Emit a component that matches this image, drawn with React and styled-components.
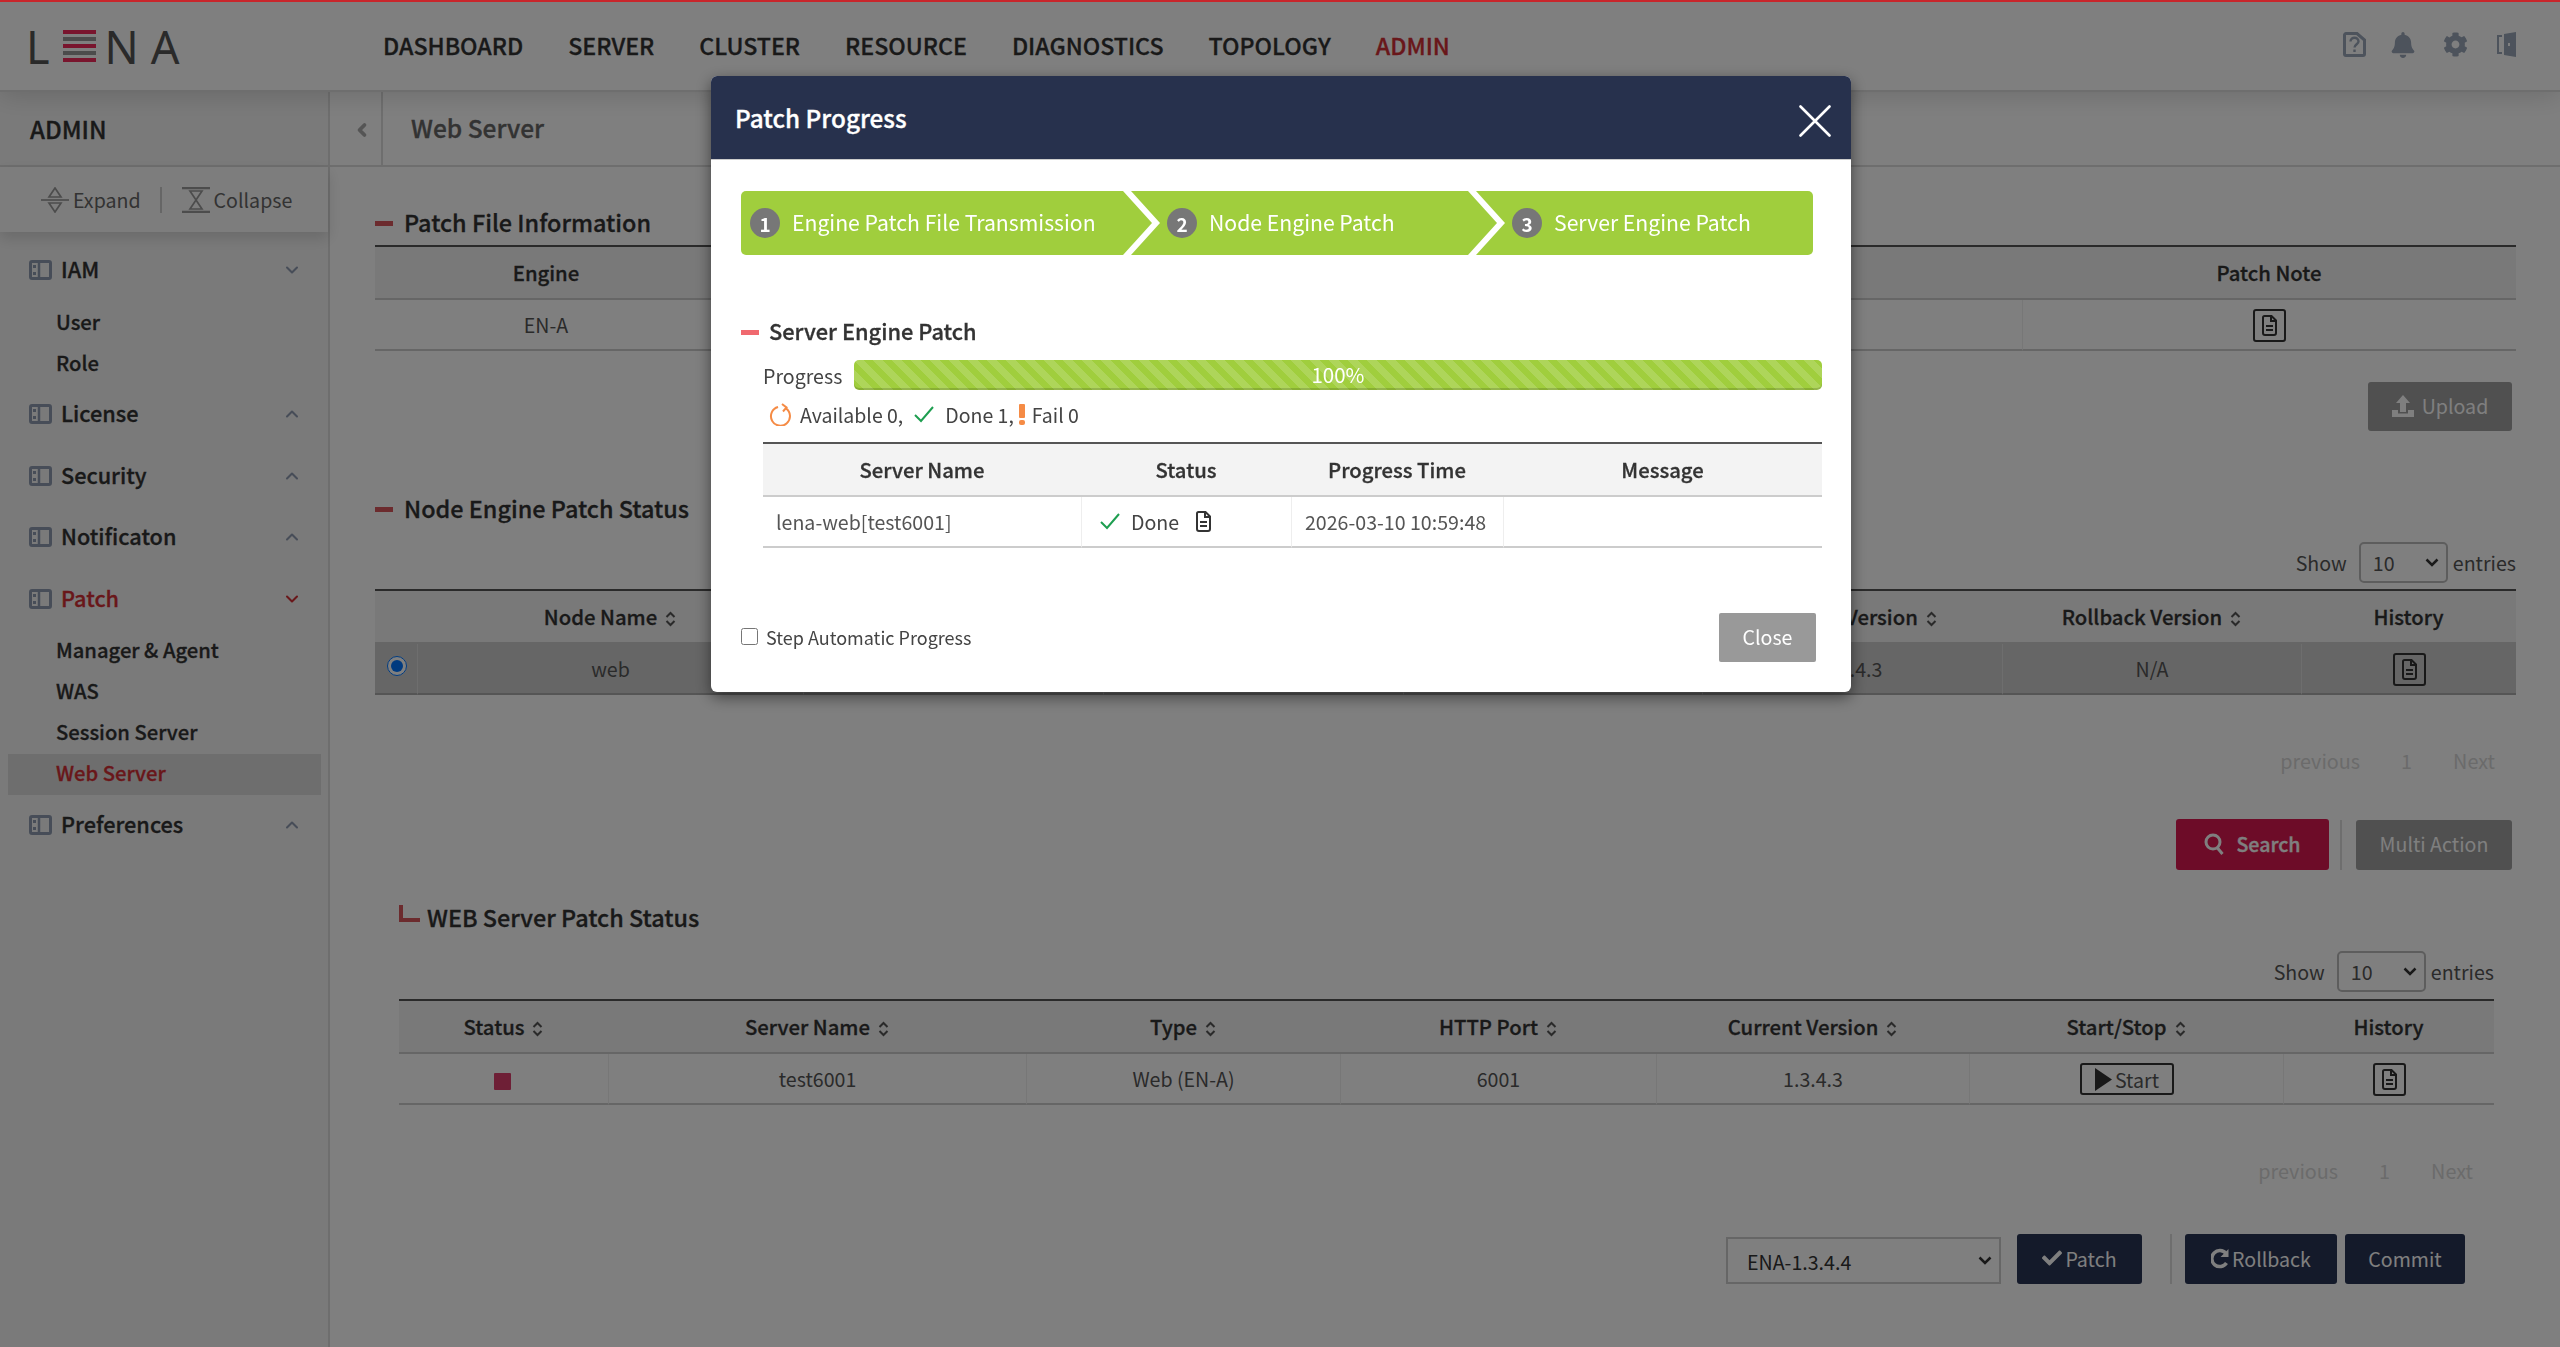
import React from 'react'
import styled, { createGlobalStyle, css } from 'styled-components'
import { FaBell, FaCog, FaCheck } from 'react-icons/fa'
import { ChevronDown, ChevronUp, ChevronLeft } from 'lucide-react'

const GlobalStyle = createGlobalStyle`
  html, body { margin: 0; padding: 0; height: 100%; background: #fff; overflow: hidden; }
  body { font-family: "Noto Sans CJK KR", "Noto Sans", sans-serif; color: #333; }
  * { box-sizing: border-box; }
`

// medium cut, thickened a touch for the soft look of the screen
const medium = css`
  font-weight: 500;
  -webkit-text-stroke: 0.3px currentColor;
`

const selectArrow = color =>
  `url("data:image/svg+xml,%3Csvg xmlns='http://www.w3.org/2000/svg' width='14' height='9'%3E%3Cpath d='M1.500 1.500 7 7l5.500-5.500' fill='none' stroke='${color}' stroke-width='2.500'/%3E%3C/svg%3E")`

const Page = styled.div`
  width: 2560px;
  height: 1347px;
  display: flex;
  flex-direction: column;
`

const TopBar = styled.header`
  height: 92px;
  flex: none;
  display: flex;
  align-items: center;
  border-top: 2px solid #c8262b;
  border-bottom: 2px solid #ddd;
  box-shadow: 0 4px 24px rgba(0, 0, 0, 0.14);
  position: relative;
  z-index: 2;
  background: #fff;
  padding-right: 44px;
`

const Logo = styled.div`
  width: 383px;
  padding-left: 26px;
  display: flex;
  align-items: center;
  font-family: "Noto Sans", sans-serif;
  font-weight: 400;
  font-size: 45px;
  color: #555;
  svg { margin: 0 9px 0 13px; }
`

const LogoTail = styled.span`
  letter-spacing: 12px;
`

const Nav = styled.nav`
  display: flex;
  gap: 45px;
  flex: 1;
`

const NavLink = styled.a`
  font-size: 23.2px;
  ${medium}
  margin-top: -3px;
  color: ${p => (p.$active ? '#d32f35' : '#333')};
`

const TopIcons = styled.div`
  display: flex;
  align-items: center;
  gap: 27px;
  margin-top: -3px;
  color: #9aa6b8;
  svg:nth-child(2) { margin-left: -3px; }
  svg:nth-child(3) { margin-right: 2px; }
`

const Body = styled.div`
  flex: 1;
  display: flex;
  min-height: 0;
`

const Sidebar = styled.aside`
  width: 330px;
  flex: none;
  background: #f5f5f5;
  border-right: 2px solid #ddd;
`

const SideTitle = styled.div`
  height: 75px;
  padding-left: 30px;
  display: flex;
  align-items: center;
  font-size: 24px;
  ${medium}
  border-bottom: 2px solid #ddd;
`

const ToolRow = styled.div`
  height: 65px;
  padding-left: 41px;
  display: flex;
  align-items: center;
  font-size: 19.6px;
  color: #666;
  background: #fafafa;
  box-shadow: 0 6px 14px rgba(0, 0, 0, 0.14);
  position: relative;
`

const ToolDivider = styled.span`
  width: 2px;
  height: 26px;
  background: #ccc;
  margin: 0 20px 0 19px;
`

const ToolIcon = styled.svg`
  margin-right: 4px;
  flex: none;
`

const Menu = styled.div`
  padding-top: 18px;
`

const Group = styled.div`
  padding-bottom: ${p => (p.$open ? '10px' : '21.5px')};
`

const GroupRow = styled.div`
  height: 40px;
  display: flex;
  align-items: center;
  padding: 0 26px 0 29px;
  font-size: 21.700px;
  ${medium}
  color: ${p => (p.$active ? '#d32f35' : '#333')};
  svg:first-child { margin-right: 9px; }
`

const GroupName = styled.span`
  flex: 1;
  padding-bottom: 3px;
`

const SubList = styled.div`
  margin-top: 12px;
`

const SubItem = styled.div`
  height: 41px;
  margin: 0 7px 0 8px;
  padding: 0 0 3px 48px;
  display: flex;
  align-items: center;
  font-size: 20.200px;
  ${medium}
  color: ${p => (p.$active ? '#d32f35' : '#333')};
  background: ${p => (p.$active ? '#dcdcdc' : 'transparent')};
`

const Main = styled.main`
  flex: 1;
  min-width: 0;
`

const TitleBar = styled.div`
  height: 75px;
  display: flex;
  align-items: center;
  border-bottom: 2px solid #ddd;
`

const CollapseCell = styled.div`
  width: 53px;
  height: 100%;
  padding: 3px 0 0 12px;
  display: flex;
  align-items: center;
  justify-content: center;
  border-right: 2px solid #ddd;
  color: #aaa;
`

const PageTitle = styled.h1`
  margin: 0 0 0 28px;
  padding-bottom: 2px;
  font-size: 24.500px;
  ${medium}
  color: #666;
`

const Content = styled.div`
  padding: 39px 44px 0 45px;
`

const Heading = styled.h2`
  margin: ${p => p.$top || 0}px 0 0;
  height: 34px;
  display: flex;
  align-items: center;
  gap: 11px;
  font-size: 23.400px;
  ${medium}
  color: #333;
  &::before {
    content: "";
    width: 18px;
    height: 5px;
    margin-top: 3px;
    background: #d9565c;
  }
  padding-bottom: 3px;
`

const SubHeading = styled.h2`
  margin: 31px 0 0;
  height: 34px;
  padding-bottom: 3px;
  display: flex;
  align-items: center;
  gap: 7px;
  font-size: 23.400px;
  ${medium}
  color: #333;
  &::before {
    content: "";
    width: 17px;
    height: 13px;
    margin-top: -6px;
    border-left: 4px solid #d9565c;
    border-bottom: 4px solid #d9565c;
  }
`

const Nested = styled.section`
  padding: 0 22px 0 24px;
`

const Table = styled.table`
  width: 100%;
  table-layout: fixed;
  border-collapse: separate;
  border-spacing: 0;
  margin-top: ${p => p.$top || 0}px;
  border-top: 2px solid #555;
  font-size: 19.600px;
`

const Col = styled.col`
  width: ${p => (p.$w ? `${p.$w}px` : 'auto')};
`

const Th = styled.th`
  height: 53px;
  padding: 0 0 1px;
  background: #f3f3f3;
  ${medium}
  font-size: 20.300px;
  color: #333;
  text-align: center;
  border-bottom: 2px solid #ccc;
  white-space: nowrap;
`

const Td = styled.td`
  height: 51px;
  padding: 0;
  text-align: ${p => (p.$left ? 'left' : 'center')};
  padding-left: ${p => (p.$left ? '13px' : 0)};
  color: #555;
  background: ${p => (p.$selected ? '#ccc' : 'transparent')};
  border-bottom: 2px solid ${p => (p.$selected ? '#aaa' : '#ccc')};
  border-left: ${p => (p.$first ? 0 : `1px solid ${p.$selected ? '#ddd' : '#eee'}`)};
  white-space: nowrap;
`

const SortMark = styled.svg`
  margin-left: 8px;
  vertical-align: -2px;
`

const Sort = () => (
  <SortMark width="11" height="16" viewBox="0 0 11 16" fill="none" stroke="#555" strokeWidth="2">
    <path d="M1.500 6 5.500 2l4 4M1.500 10l4 4 4-4" />
  </SortMark>
)

const DocButton = styled.span`
  display: inline-flex;
  width: 33px;
  height: 33px;
  align-items: center;
  justify-content: center;
  border: 2px solid #333;
  border-radius: 3px;
  vertical-align: middle;
`

const DocIcon = () => (
  <svg width="15" height="21" viewBox="0 0 15 21" fill="none" stroke="#333" strokeWidth="2">
    <path d="M2.500 1h7L14 5.500V18a2 2 0 0 1-2 2H3a2 2 0 0 1-2-2V2.500A1.500 1.500 0 0 1 2.500 1z" />
    <path d="M9 1v5h5M4 11h7M4 15h7" />
  </svg>
)

const RadioInput = styled.input`
  width: 20px;
  height: 20px;
  margin: 0 0 8px 2px;
  vertical-align: middle;
`

const BtnRow = styled.div`
  display: flex;
  justify-content: flex-end;
  align-items: center;
  margin-top: ${p => p.$top}px;
  padding-right: ${p => p.$right || 0}px;
`

const Btn = styled.button`
  height: ${p => p.$h || 50}px;
  width: ${p => p.$w}px;
  margin: 0;
  padding: 0 0 2px;
  border: 0;
  border-radius: 3px;
  display: inline-flex;
  align-items: center;
  justify-content: center;
  gap: ${p => p.$gap || 0}px;
  font-family: inherit;
  font-size: 19.600px;
  color: #fff;
  background: ${p => p.$bg};
  ${p => p.$bold && medium}
`

const Split = styled.span`
  width: 2px;
  height: 50px;
  background: ${p => (p.$blank ? 'transparent' : '#ddd')};
  margin: ${p => p.$m};
`

const ShowRow = styled.div`
  display: flex;
  justify-content: flex-end;
  align-items: center;
  margin-top: ${p => p.$top}px;
  font-size: 19.600px;
  color: #555;
`

const SelectBox = styled.select`
  appearance: none;
  width: 89px;
  height: 41px;
  margin: 0 5px 0 12px;
  padding-left: 12px;
  font-family: inherit;
  font-size: 19.600px;
  color: #555;
  background: #fff ${selectArrow('%23333')} no-repeat right 7px top 14px;
  border: 2px solid #bbb;
  border-radius: 5px;
`

const Pager = styled.div`
  display: flex;
  justify-content: flex-end;
  align-items: center;
  height: 40px;
  margin-top: 46px;
  padding: 0 21px 2px 0;
  font-size: 19.800px;
  color: #d6d6d6;
`

const PagerNum = styled.span`
  width: 93px;
  text-align: center;
`

const VersionSelect = styled.select`
  appearance: none;
  width: 275px;
  height: 47px;
  margin: 3px 16px 0 0;
  padding: 2px 0 0 19px;
  font-family: inherit;
  font-size: 19.600px;
  color: #333;
  background: #fff ${selectArrow('%23333')} no-repeat right 7px top 17px;
  border: 2px solid #ccc;
`

const Square = styled.span`
  display: inline-block;
  width: 17px;
  height: 17px;
  margin-right: 2px;
  background: #dd3f6c;
  border-radius: 1px;
  vertical-align: middle;
`

const StartBtn = styled.span`
  display: inline-flex;
  width: 94px;
  height: 32px;
  align-items: center;
  justify-content: center;
  gap: 2px;
  border: 2px solid #333;
  border-radius: 3px;
  color: #555;
  vertical-align: middle;
`

const Backdrop = styled.div`
  position: fixed;
  inset: 2px 0 0 0;
  background: rgba(0, 0, 0, 0.5);
  z-index: 10;
`

const Modal = styled.div`
  position: fixed;
  top: 76px;
  left: 711px;
  width: 1140px;
  height: 616px;
  background: #fff;
  border-radius: 6px;
  overflow: hidden;
  z-index: 11;
  box-shadow: 0 5px 15px rgba(0, 0, 0, 0.5);
`

const ModalHead = styled.div`
  height: 84px;
  display: flex;
  align-items: center;
  justify-content: space-between;
  padding: 0 20px 0 24px;
  background: #27314d;
  border-bottom: 1px solid #ccc;
  color: #fff;
  font-size: 24.300px;
  ${medium}
  svg { margin-top: 7px; }
`

const ModalBody = styled.div`
  padding: 31px 29px 0 30px;
`

const Steps = styled.div`
  width: 1072px;
  height: 64px;
  display: flex;
  background: #a0ce3d;
  border-radius: 5px;
  overflow: hidden;
`

const Step = styled.div`
  position: relative;
  width: ${p => p.$w}px;
  display: flex;
  align-items: center;
  padding-left: 9px;
  gap: 12px;
  color: #fff;
  font-size: 21.200px;
  &:not(:last-child)::after {
    content: "";
    position: absolute;
    top: 0;
    bottom: 0;
    right: -2px;
    width: 37px;
    background: #fff;
    clip-path: polygon(0 0, 8px 0, 100% 50%, 8px 100%, 0 100%, calc(100% - 8px) 50%);
  }
`

const StepNum = styled.span`
  width: 30px;
  height: 30px;
  border-radius: 50%;
  background: #777;
  color: #fff;
  display: flex;
  align-items: center;
  justify-content: center;
  font-size: 19px;
  font-weight: 700;
`

const StepLabel = styled.span`
  padding-bottom: 4px;
`

const ModalHeading = styled(Heading)`
  margin-top: 60px;
  font-size: 21.800px;
  gap: 10px;
  &::before { background: #f0696f; }
`

const Inner = styled.div`
  margin: 11px 0 0 22px;
`

const ProgressRow = styled.div`
  display: grid;
  grid-template-columns: 91px 1fr;
  align-items: center;
  height: 30px;
  font-size: 19.600px;
  color: #444;
`

const ProgressBar = styled.div`
  height: 30px;
  border-radius: 5px;
  color: #fff;
  text-align: center;
  line-height: 28px;
  font-size: 20.500px;
  background-color: #a0ce3d;
  background-image: linear-gradient(45deg,
    rgba(255, 255, 255, 0.15) 25%, transparent 25%, transparent 50%,
    rgba(255, 255, 255, 0.15) 50%, rgba(255, 255, 255, 0.15) 75%, transparent 75%);
  background-size: 19px 19px;
  box-shadow: inset 0 -2px 0 rgba(0, 0, 0, 0.15);
`

const StatusLine = styled.div`
  display: flex;
  align-items: center;
  height: 30px;
  margin: 10px 0 12px 6px;
  padding-bottom: 2px;
  font-size: 19.500px;
  color: #444;
`

const StatusText = styled.span`
  margin-left: 9px;
`

const StatusCheck = styled.span`
  display: flex;
  margin: 0 11px 0 11px;
`

const Bang = styled.span`
  width: 8px;
  margin: 0 6px 0 4px;
  display: flex;
  flex-direction: column;
  align-items: center;
  gap: 2px;
  &::before { content: ""; width: 6px; height: 14px; background: #f58b45; border-radius: 1px; }
  &::after { content: ""; width: 6px; height: 5px; background: #f58b45; border-radius: 2px; }
`

const DoneCell = styled.span`
  display: inline-flex;
  align-items: center;
  gap: 11px;
  margin-left: 5px;
  padding-bottom: 2px;
  color: #444;
  vertical-align: middle;
  svg:last-child { margin-left: 6px; }
`

const ModalFoot = styled.div`
  display: flex;
  align-items: center;
  justify-content: space-between;
  margin: 65px 6px 0 0;
`

const StepCheck = styled.label`
  display: flex;
  align-items: center;
  gap: 8px;
  padding-bottom: 2px;
  font-size: 18px;
  color: #444;
  input { width: 17px; height: 17px; margin: 0; }
`

const CloseBtn = styled(Btn)`
  background: #999;
  border-radius: 2px;
`

const PanelIcon = ({ color = '#8f9bb0' }) => (
  <svg width="23" height="20" viewBox="0 0 23 20" fill="none" stroke={color} strokeWidth="3">
    <rect x="1.500" y="1.500" width="20" height="17" rx="1.500" />
    <path d="M10 1v18" strokeWidth="2.500" />
    <path d="M4 6.500h3M4 13.500h3" />
  </svg>
)

const Triangle = ({ down, x, y }) => (
  <path d={down ? `M${x} ${y}h12l-6 9z` : `M${x} ${y + 9}h12l-6-9z`} />
)

const ExpandIcon = () => (
  <ToolIcon width="28" height="26" viewBox="0 0 28 26" fill="none" stroke="#999" strokeWidth="1.700">
    <Triangle x={8} y={1} />
    <path d="M0 13h28" />
    <Triangle down x={8} y={16} />
  </ToolIcon>
)

const CollapseIcon = () => (
  <ToolIcon width="28" height="26" viewBox="0 0 28 26" fill="none" stroke="#999" strokeWidth="1.700">
    <path d="M0 1h28M0 25h28" strokeWidth="2.500" />
    <Triangle down x={8} y={4} />
    <Triangle x={8} y={13} />
  </ToolIcon>
)

const LogoBars = () => (
  <svg width="33" height="32" viewBox="0 0 33 32">
    <path d="M0 0h33v4H0zM0 14h33v4H0zM0 28h33v4H0z" fill="#f22a5c" />
    <path d="M0 7h33v4H0zM0 21h33v4H0z" fill="#999" />
  </svg>
)

const HelpDoc = () => (
  <svg width="23" height="25" viewBox="0 0 23 25" fill="none" stroke="currentColor" strokeWidth="3">
    <path d="M3 1.500h11L21.500 8v14a1.500 1.500 0 0 1-1.500 1.500H3A1.500 1.500 0 0 1 1.500 22V3A1.500 1.500 0 0 1 3 1.500z" />
    <path d="M7.500 9.500c0-5 8-5 8 0 0 2.500-4 3-4 6" strokeWidth="2.400" />
    <path d="M11.500 17.500v2.500" strokeWidth="2.400" />
  </svg>
)

const DoorIcon = () => (
  <svg width="19" height="25" viewBox="0 0 19 25" fill="currentColor">
    <path d="M7 2 19 0v25L7 23zM11 11v3h2v-3z" fillRule="evenodd" />
    <path d="M0 3h5v2H2v15h3v2H0z" />
  </svg>
)

const UploadIcon = () => (
  <svg width="22" height="22" viewBox="0 0 22 22" fill="#fff">
    <path d="M11 0l7 8h-4v9H8V8H4z" />
    <path d="M0 15h6v3.500h10V15h6v7H0z" />
  </svg>
)

const SearchIcon = () => (
  <svg width="21" height="22" viewBox="0 0 21 22" fill="none" stroke="#fff" strokeWidth="3">
    <circle cx="9" cy="9" r="7" />
    <path d="M13.500 15l5 6" />
  </svg>
)

const RollbackIcon = () => (
  <svg width="18" height="21" viewBox="0 0 18 21" fill="none" stroke="#fff" strokeWidth="3.500">
    <path d="M15 5.500A8 8 0 1 0 15.500 15" />
    <path d="M17.500 1v8h-8z" fill="#fff" stroke="none" />
  </svg>
)

const RefreshIcon = () => (
  <svg width="22" height="23" viewBox="0 0 22 23" fill="none" stroke="#f58b45" strokeWidth="2">
    <path d="M15.500 4.500a9.500 9.500 0 1 1-8 0" transform="rotate(10 11 13)" />
    <path d="M13 1l4.500 3.500L14 8.500" />
  </svg>
)

const GreenCheck = () => (
  <svg width="20" height="17" viewBox="0 0 20 17" fill="none" stroke="#1e9e50" strokeWidth="2">
    <path d="M1 9l6 6L19 1" />
  </svg>
)

const menu = [
  { name: 'IAM', open: true, items: ['User', 'Role'] },
  { name: 'License' },
  { name: 'Security' },
  { name: 'Notificaton' },
  { name: 'Patch', open: true, active: true, items: ['Manager & Agent', 'WAS', 'Session Server', 'Web Server'] },
  { name: 'Preferences' },
]

const navItems = ['DASHBOARD', 'SERVER', 'CLUSTER', 'RESOURCE', 'DIAGNOSTICS', 'TOPOLOGY', 'ADMIN']

const App = () => {
  return (
    <Page>
      <GlobalStyle />
      <TopBar>
        <Logo>L<LogoBars /><LogoTail>NA</LogoTail></Logo>
        <Nav>
          {navItems.map(n => <NavLink key={n} $active={n === 'ADMIN'}>{n}</NavLink>)}
        </Nav>
        <TopIcons>
          <HelpDoc />
          <FaBell size={26} />
          <FaCog size={25} />
          <DoorIcon />
        </TopIcons>
      </TopBar>
      <Body>
        <Sidebar>
          <SideTitle>ADMIN</SideTitle>
          <ToolRow>
            <ExpandIcon />Expand
            <ToolDivider />
            <CollapseIcon />Collapse
          </ToolRow>
          <Menu>
            {menu.map(g => (
              <Group key={g.name} $open={g.open}>
                <GroupRow $active={g.active}>
                  <PanelIcon />
                  <GroupName>{g.name}</GroupName>
                  {g.open
                    ? <ChevronDown size={20} strokeWidth={2.5} color={g.active ? '#d32f35' : '#8f9bb0'} />
                    : <ChevronUp size={20} strokeWidth={2.5} color="#8f9bb0" />}
                </GroupRow>
                {g.items && (
                  <SubList>
                    {g.items.map(i => <SubItem key={i} $active={i === 'Web Server'}>{i}</SubItem>)}
                  </SubList>
                )}
              </Group>
            ))}
          </Menu>
        </Sidebar>
        <Main>
          <TitleBar>
            <CollapseCell><ChevronLeft size={20} strokeWidth={4.5} /></CollapseCell>
            <PageTitle>Web Server</PageTitle>
          </TitleBar>
          <Content>
            <Heading>Patch File Information</Heading>
            <Table $top={5}>
              <colgroup><Col $w={342} /><Col /><Col $w={494} /></colgroup>
              <thead><tr><Th>Engine</Th><Th /><Th>Patch Note</Th></tr></thead>
              <tbody>
                <tr>
                  <Td $first>EN-A</Td>
                  <Td />
                  <Td><DocButton><DocIcon /></DocButton></Td>
                </tr>
              </tbody>
            </Table>
            <BtnRow $top={31} $right={4}>
              <Btn $w={144} $h={49} $gap={8} $bg="#a0a0a0"><UploadIcon />Upload</Btn>
            </BtnRow>

            <Heading $top={61}>Node Engine Patch Status</Heading>
            <ShowRow $top={16}>Show<SelectBox><option>10</option></SelectBox>entries</ShowRow>
            <Table $top={6}>
              <colgroup>
                <Col $w={42} /><Col $w={386} /><Col $w={300} /><Col $w={300} /><Col $w={299} /><Col $w={300} /><Col $w={299} /><Col />
              </colgroup>
              <thead>
                <tr>
                  <Th />
                  <Th>Node Name<Sort /></Th>
                  <Th /><Th /><Th />
                  <Th>Current Version<Sort /></Th>
                  <Th>Rollback Version<Sort /></Th>
                  <Th>History</Th>
                </tr>
              </thead>
              <tbody>
                <tr>
                  <Td $first $selected><RadioInput type="radio" defaultChecked /></Td>
                  <Td $selected>web</Td>
                  <Td $selected /><Td $selected /><Td $selected />
                  <Td $selected>1.3.4.3</Td>
                  <Td $selected>N/A</Td>
                  <Td $selected><DocButton><DocIcon /></DocButton></Td>
                </tr>
              </tbody>
            </Table>
            <Pager>previous<PagerNum>1</PagerNum>Next</Pager>
            <BtnRow $top={38} $right={4}>
              <Btn $w={153} $h={51} $gap={11} $bold $bg="#da1850"><SearchIcon />Search</Btn>
              <Split $m="0 14px 0 11px" />
              <Btn $w={156} $bg="#a0a0a0">Multi Action</Btn>
            </BtnRow>

            <Nested>
              <SubHeading>WEB Server Patch Status</SubHeading>
              <ShowRow $top={16}>Show<SelectBox><option>10</option></SelectBox>entries</ShowRow>
              <Table $top={7}>
                <colgroup>
                  <Col $w={209} /><Col $w={418} /><Col $w={314} /><Col $w={316} /><Col $w={313} /><Col $w={314} /><Col />
                </colgroup>
                <thead>
                  <tr>
                    <Th>Status<Sort /></Th>
                    <Th>Server Name<Sort /></Th>
                    <Th>Type<Sort /></Th>
                    <Th>HTTP Port<Sort /></Th>
                    <Th>Current Version<Sort /></Th>
                    <Th>Start/Stop<Sort /></Th>
                    <Th>History</Th>
                  </tr>
                </thead>
                <tbody>
                  <tr>
                    <Td $first><Square /></Td>
                    <Td>test6001</Td>
                    <Td>Web (EN-A)</Td>
                    <Td>6001</Td>
                    <Td>1.3.4.3</Td>
                    <Td>
                      <StartBtn>
                        <svg width="19" height="23" viewBox="0 0 19 23" fill="#333"><path d="M1 0l17 11.500L1 23z" /></svg>
                        Start
                      </StartBtn>
                    </Td>
                    <Td><DocButton><DocIcon /></DocButton></Td>
                  </tr>
                </tbody>
              </Table>
              <Pager>previous<PagerNum>1</PagerNum>Next</Pager>
              <BtnRow $top={43} $right={29}>
                <VersionSelect><option>ENA-1.3.4.4</option></VersionSelect>
                <Btn $w={125} $gap={3} $bg="#283454"><FaCheck size={20} />Patch</Btn>
                <Split $m="0 13px 0 28px" />
                <Btn $w={152} $gap={3} $bg="#283454"><RollbackIcon />Rollback</Btn>
                <Split $blank $m="0 3px" />
                <Btn $w={120} $bg="#283454">Commit</Btn>
              </BtnRow>
            </Nested>
          </Content>
        </Main>
      </Body>

      <Backdrop />
      <Modal>
        <ModalHead>
          Patch Progress
          <svg width="32" height="32" viewBox="0 0 32 32" stroke="#fff" strokeWidth="2.600" strokeLinecap="round">
            <path d="M1.500 1.500l29 29M30.500 1.500l-29 29" />
          </svg>
        </ModalHead>
        <ModalBody>
          <Steps>
            <Step $w={417}><StepNum>1</StepNum><StepLabel>Engine Patch File Transmission</StepLabel></Step>
            <Step $w={345}><StepNum>2</StepNum><StepLabel>Node Engine Patch</StepLabel></Step>
            <Step $w={310}><StepNum>3</StepNum><StepLabel>Server Engine Patch</StepLabel></Step>
          </Steps>
          <ModalHeading>Server Engine Patch</ModalHeading>
          <Inner>
            <ProgressRow>Progress<ProgressBar>100%</ProgressBar></ProgressRow>
            <StatusLine>
              <RefreshIcon />
              <StatusText>Available 0,</StatusText>
              <StatusCheck><GreenCheck /></StatusCheck>
              Done 1,
              <Bang />
              Fail 0
            </StatusLine>
            <Table>
              <colgroup><Col $w={318} /><Col $w={210} /><Col $w={212} /><Col /></colgroup>
              <thead>
                <tr><Th>Server Name</Th><Th>Status</Th><Th>Progress Time</Th><Th>Message</Th></tr>
              </thead>
              <tbody>
                <tr>
                  <Td $first $left>lena-web[test6001]</Td>
                  <Td $left><DoneCell><GreenCheck />Done<DocIcon /></DoneCell></Td>
                  <Td $left>2026-03-10 10:59:48</Td>
                  <Td />
                </tr>
              </tbody>
            </Table>
          </Inner>
          <ModalFoot>
            <StepCheck><input type="checkbox" />Step Automatic Progress</StepCheck>
            <CloseBtn $w={97} $h={49}>Close</CloseBtn>
          </ModalFoot>
        </ModalBody>
      </Modal>
    </Page>
  )
}

export default App
